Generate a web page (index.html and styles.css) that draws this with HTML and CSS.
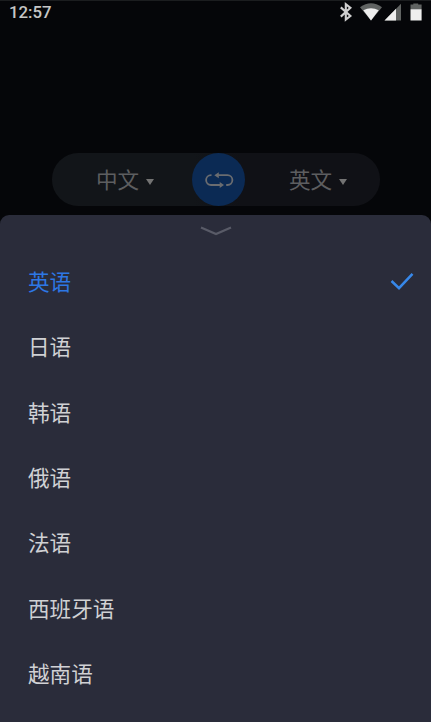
FILE: index.html
```html
<!DOCTYPE html>
<html lang="zh-CN">
<head>
<meta charset="utf-8">
<title>翻译</title>
<link rel="stylesheet" href="styles.css">
</head>
<body>
<header class="status">
  <span class="time">12:57</span>
  <svg class="status-icons" width="86" height="24" viewBox="0 0 86 24">
    <path d="M4.8 7.4 14.4 16 9.8 19.6V4.2L14.4 7.9 4.8 16.6" fill="none" stroke="#d0d0d0" stroke-width="2.1"/>
    <path d="M24 7.2Q35 -.6 46 7.2L35 20.4Z" fill="#606362"/>
    <path d="M27.3 10.3Q35 6 42.7 10.3L35 20.4Z" fill="#eee"/>
    <path d="M65 3.8V20.5H48.5Z" fill="#606362"/>
    <path d="M60 8.8V20.5H48.5Z" fill="#eee"/>
    <path d="M74.5 4.6H77.3V3.5H82.2V4.6H85.6V9.2H74.5Z" fill="#606362"/>
    <path d="M74.5 9.2H85.6V20.5H74.5Z" fill="#eee"/>
  </svg>
</header>
<main class="stage">
  <div class="switcher">
    <div class="lang source"><span>中文</span><i class="caret"></i></div>
    <div class="swap">
      <svg width="29" height="18" viewBox="0 0 29 18">
        <g fill="none" stroke="#6a6c70" stroke-width="1.8">
          <path d="M6.5 4.2H6a4.8 4.8 0 0 0 0 9.8H16"/>
          <path d="M12 4.2H22.5a4.8 4.8 0 0 1 0 9.8H21.2"/>
        </g>
        <path d="M9.3 4.2 13.8 1.2V7.2ZM19 14 14.7 11V17Z" fill="#6a6c70"/>
      </svg>
    </div>
    <div class="lang target"><span>英文</span><i class="caret"></i></div>
  </div>
</main>
<section class="sheet">
  <div class="handle">
    <svg width="32" height="10" viewBox="0 0 32 10"><path d="M1 1.5 16 8 31 1.5" fill="none" stroke="#595b67" stroke-width="2.2"/></svg>
  </div>
  <ul class="list">
    <li class="selected"><span>英语</span>
      <svg width="24" height="19" viewBox="0 0 24 19"><path d="M1.5 9 9 16.2 22.5 1.8" fill="none" stroke="#3788e9" stroke-width="2.5"/></svg>
    </li>
    <li><span>日语</span></li>
    <li><span>韩语</span></li>
    <li><span>俄语</span></li>
    <li><span>法语</span></li>
    <li><span>西班牙语</span></li>
    <li><span>越南语</span></li>
  </ul>
</section>
</body>
</html>
```
FILE: styles.css
```css
* { box-sizing: border-box; }
body {
  margin: 0;
  height: 722px;
  overflow: hidden;
  display: flex;
  flex-direction: column;
  background: #050609;
  font-family: "Noto Sans CJK SC", sans-serif;
}
.status {
  height: 24px;
  flex: none;
  display: flex;
  justify-content: space-between;
  padding: 0 9px 0 9px;
  border-top: 1px solid #1b1d1f;
}
.time {
  font: 500 16.8px/23px Roboto, sans-serif;
  color: #c6c6c6;
}
.status-icons { margin-top: -1px; }
.stage {
  height: 190.5px;
  flex: none;
  padding: 129px 51px 0 52px;
}
.switcher {
  height: 53px;
  display: flex;
  border-radius: 27px;
  background: linear-gradient(90deg, #121519 43%, #101116 58%);
}
.lang {
  display: flex;
  align-items: center;
  gap: 7px;
  font-size: 21.6px;
  line-height: 32px;
  color: #5d5e60;
}
.lang span { padding-bottom: 1px; }
.source { width: 140px; padding-left: 44px; }
.target { padding-left: 44px; }
.caret {
  margin-top: 4px;
  border: 4.2px solid transparent;
  border-top: 6.5px solid #737373;
  border-bottom: 0;
}
.swap {
  width: 53px;
  height: 53px;
  padding-left: 2px;
  border-radius: 50%;
  background: #0b2a54;
  display: flex;
  align-items: center;
  justify-content: center;
}
.sheet {
  flex: 1;
  border-radius: 9px 9px 0 0;
  background: #2a2c3a;
}
.handle {
  height: 34.5px;
  padding-top: 11px;
  display: flex;
  justify-content: center;
}
.list { margin: 0; padding: 0; list-style: none; }
.list li {
  height: 65.4px;
  padding: 0 17px 0 28px;
  display: flex;
  align-items: center;
  justify-content: space-between;
  font-size: 21.6px;
  line-height: 32px;
  color: #d0d1d4;
}
.list span { padding-bottom: 1.6px; }
.list .selected { color: #2d77e4; }
```
